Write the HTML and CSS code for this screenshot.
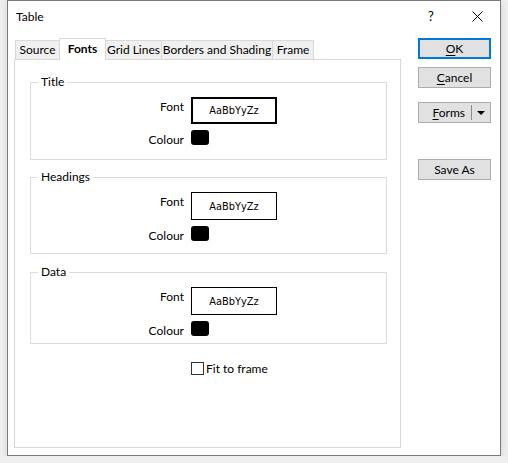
FILE: index.html
```html
<!DOCTYPE html>
<html lang="en">
<head>
  <meta charset="UTF-8">
  <title>Table</title>
  <link rel="stylesheet" href="styles.css">
</head>
<body>

  <div class="window">

    <!-- Title bar -->
    <div class="titlebar">
      <span class="title">Table</span>
      <span class="title-btn">?</span>
      <span class="title-btn">
        <svg width="11" height="11" viewBox="0 0 11 11">
          <path d="M0.5 0.5 L10.5 10.5 M10.5 0.5 L0.5 10.5" stroke="#000" stroke-width="1" fill="none"/>
        </svg>
      </span>
    </div>

    <div class="main">

      <!-- Tabs -->
      <div class="tabs-area">
        <div class="tabstrip">
          <div class="tab tab-source">Source</div>
          <div class="tab tab-fonts active">Fonts</div>
          <div class="tab tab-grid">Grid Lines</div>
          <div class="tab tab-borders">Borders and Shading</div>
          <div class="tab tab-frame">Frame</div>
        </div>

        <div class="panel">
          <div class="group group-title">
            <span class="group-label">Title</span>
            <div class="rows">
              <span class="row-label">Font</span>
              <div class="font-box focused">AaBbYyZz</div>
              <span class="row-label colour-label">Colour</span>
              <div class="swatch"></div>
            </div>
          </div>

          <div class="group group-headings">
            <span class="group-label">Headings</span>
            <div class="rows">
              <span class="row-label">Font</span>
              <div class="font-box">AaBbYyZz</div>
              <span class="row-label colour-label">Colour</span>
              <div class="swatch"></div>
            </div>
          </div>

          <div class="group group-data">
            <span class="group-label">Data</span>
            <div class="rows">
              <span class="row-label">Font</span>
              <div class="font-box">AaBbYyZz</div>
              <span class="row-label colour-label">Colour</span>
              <div class="swatch"></div>
            </div>
          </div>

          <label class="fit-row">
            <span class="checkbox"></span>
            <span>Fit to frame</span>
          </label>
        </div>
      </div>

      <!-- Buttons -->
      <div class="buttons">
        <div class="btn btn-default"><u>O</u>K</div>
        <div class="btn btn-cancel"><u>C</u>ancel</div>
        <div class="btn btn-forms">
          <span class="forms-text"><u>F</u>orms</span>
          <span class="forms-sep"></span>
          <span class="forms-arrow"></span>
        </div>
        <div class="btn btn-save">Save As</div>
      </div>

    </div>
  </div>

</body>
</html>
```

FILE: styles.css
```css
* {
  box-sizing: border-box;
  margin: 0;
  padding: 0;
}

body {
  background: #efefef;
  font-family: 'Lato', 'Noto Sans', sans-serif;
  font-size: 12px;
  color: #000;
  overflow: hidden;
}

.window {
  margin-left: 7px;
  width: 494px;
  height: 456px;
  background: #fff;
  border: 1px solid #7a7a7a;
  box-shadow: 0 2px 8px rgba(0, 0, 0, 0.12);
}

/* Title bar */
.titlebar {
  height: 30px;
  display: flex;
  align-items: center;
}

.title {
  padding-left: 8px;
  flex: 1;
}

.title-btn {
  width: 46px;
  height: 30px;
  display: flex;
  align-items: center;
  justify-content: center;
  font-size: 13px;
}

/* Main area */
.main {
  display: flex;
  padding: 7px 0 0 6px;
}

.tabs-area {
  width: 387px;
}

.tabstrip {
  display: flex;
  align-items: flex-end;
  height: 21px;
  padding-left: 1px;
}

.tab {
  height: 19px;
  line-height: 18px;
  text-align: center;
  background: #f0f0f0;
  border: 1px solid #d9d9d9;
  border-bottom: none;
  margin-left: -1px;
  white-space: nowrap;
}

.tab:first-child {
  margin-left: 0;
}

.tab.active {
  height: 22px;
  line-height: 20px;
  margin-bottom: -1px;
  background: #fff;
  font-weight: bold;
  position: relative;
  z-index: 1;
}

.tab-source { width: 45px; }
.tab-fonts { width: 47px; }
.tab-grid { width: 57px; }
.tab-borders { width: 112px; }
.tab-frame { width: 42px; }

.panel {
  height: 389px;
  border: 1px solid #d9d9d9;
  padding: 22px 13px 0 15px;
}

/* Group boxes */
.group {
  position: relative;
  border: 1px solid #dcdcdc;
  padding-top: 14px;
}

.group-title { height: 78px; }
.group-headings { height: 77px; margin-top: 17px; }
.group-data { height: 72px; margin-top: 18px; }

.group-label {
  position: absolute;
  top: -9px;
  left: 7px;
  padding: 0 3px;
  background: #fff;
  line-height: 16px;
}

.rows {
  display: grid;
  grid-template-columns: 153px 86px;
  column-gap: 7px;
  row-gap: 6px;
}

.row-label {
  text-align: right;
  line-height: 16px;
  padding-top: 2px;
}

.colour-label {
  padding-top: 2px;
}

.font-box {
  height: 28px;
  border: 1px solid #000;
  font-family: 'DejaVu Sans', sans-serif;
  font-size: 9.8px;
  display: flex;
  align-items: center;
  justify-content: center;
}

.font-box.focused {
  height: 27px;
  border-width: 2px;
}

.swatch {
  width: 18px;
  height: 15px;
  background: #000;
  border-radius: 3px;
}

.fit-row {
  display: flex;
  align-items: center;
  gap: 2px;
  margin: 17px 0 0 161px;
}

.checkbox {
  width: 13px;
  height: 13px;
  border: 1px solid #333;
  background: #fff;
}

/* Buttons */
.buttons {
  margin-left: 17px;
  display: flex;
  flex-direction: column;
}

.btn {
  width: 73px;
  height: 21px;
  background: #e1e1e1;
  border: 1px solid #adadad;
  display: flex;
  align-items: center;
  justify-content: center;
}

.btn u {
  text-decoration-thickness: 1px;
  text-underline-offset: 2px;
}

.btn-default {
  border: 2px solid #0078d7;
}

.btn-cancel { margin-top: 8px; }
.btn-forms { margin-top: 14px; justify-content: flex-end; }
.btn-save { margin-top: 36px; }

.forms-sep {
  width: 1px;
  height: 15px;
  background: #8a8a8a;
  margin-left: 6px;
}

.forms-arrow {
  width: 0;
  height: 0;
  border-left: 4px solid transparent;
  border-right: 4px solid transparent;
  border-top: 4px solid #000;
  margin: 1px 5px 0 5px;
}
```
